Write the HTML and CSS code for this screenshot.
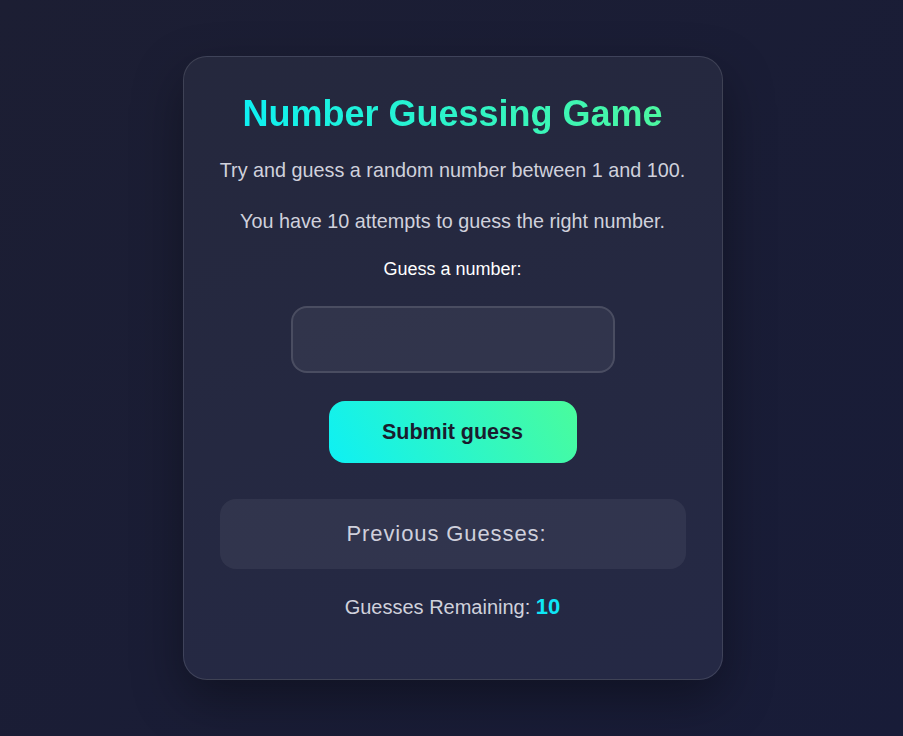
FILE: index.html
```html
<!DOCTYPE html>
<html lang="en">
<head>
<meta charset="utf-8">
<title>Number Guessing Game</title>
<link rel="stylesheet" href="styles.css">
</head>
<body>
<main class="card">
  <h1 class="title">Number Guessing Game</h1>
  <p class="intro">Try and guess a random number between 1 and 100.</p>
  <p class="intro">You have 10 attempts to guess the right number.</p>
  <label class="label" for="guess">Guess a number:</label>
  <input class="guess-input" id="guess" type="number">
  <button class="submit" type="button">Submit guess</button>
  <div class="previous">Previous Guesses:</div>
  <p class="remaining">Guesses Remaining: <span class="count">10</span></p>
</main>
</body>
</html>
```

FILE: styles.css
```css
* { box-sizing: border-box; }

html, body { height: 100%; }

body {
  margin: 0;
  padding-left: 2px;
  min-height: 100vh;
  display: flex;
  align-items: center;
  justify-content: center;
  background: linear-gradient(135deg, #1c1e33 0%, #181c38 100%);
  font-family: "Liberation Sans", Arial, sans-serif;
  color: #d3d4de;
}

.card {
  width: 540px;
  padding: 37px 36px 36px;
  border: 1px solid rgba(255, 255, 255, 0.12);
  border-radius: 24px;
  background: linear-gradient(160deg, #25283d 0%, #252945 100%);
  box-shadow: 0 20px 50px rgba(0, 0, 0, 0.35);
  display: flex;
  flex-direction: column;
  align-items: center;
  text-align: center;
}

.title {
  margin: 0 0 21px;
  font-size: 36px;
  line-height: 40px;
  font-weight: 700;
  background: linear-gradient(90deg, #0ef0f2 0%, #4cf7a0 100%);
  -webkit-background-clip: text;
  background-clip: text;
  color: transparent;
}

.intro {
  margin: 0 0 21px;
  font-size: 19.8px;
  line-height: 30px;
  white-space: nowrap;
  color: #d0d1dc;
}

.intro + .label { margin-top: 1px; }

.label {
  display: block;
  font-size: 18px;
  line-height: 22px;
  color: #ffffff;
  margin-bottom: 26px;
}

.guess-input {
  width: 324px;
  height: 67px;
  border: 2px solid rgba(255, 255, 255, 0.12);
  border-radius: 16px;
  background: rgba(255, 255, 255, 0.06);
  color: #ffffff;
  font-size: 24px;
  text-align: center;
  outline: none;
  margin-bottom: 28px;
}

.submit {
  width: 248px;
  height: 62px;
  border: none;
  border-radius: 16px;
  background: linear-gradient(60deg, #0ef0f4 0%, #4afc9c 100%);
  color: #1a1b2e;
  font-family: "Liberation Sans", Arial, sans-serif;
  font-size: 21.5px;
  font-weight: 700;
  margin-bottom: 36px;
}

.previous {
  width: 100%;
  height: 70px;
  padding-right: 12px;
  border-radius: 16px;
  background: rgba(255, 255, 255, 0.06);
  display: flex;
  align-items: center;
  justify-content: center;
  font-size: 22px;
  letter-spacing: 0.9px;
  color: #cfd0dc;
  margin-bottom: 23px;
}

.remaining {
  margin: 0 0 21px;
  font-size: 20px;
  line-height: 30px;
  color: #d0d1dc;
}

.count {
  color: #0ee6f6;
  font-weight: 700;
  font-size: 22px;
}
```
